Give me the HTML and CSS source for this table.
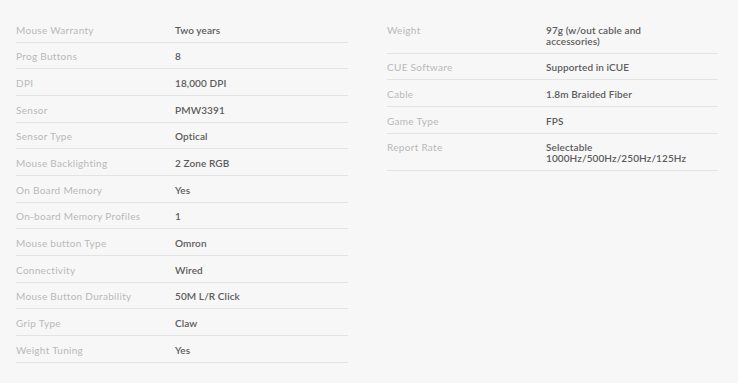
FILE: index.html
```html
<!DOCTYPE html>
<html>
<head>
<meta charset="utf-8">
<link rel="stylesheet" href="styles.css">
</head>
<body>
<div class="specs">
  <dl class="col">
    <div class="row"><dt>Mouse Warranty</dt><dd>Two years</dd></div>
    <div class="row"><dt>Prog Buttons</dt><dd>8</dd></div>
    <div class="row"><dt>DPI</dt><dd>18,000 DPI</dd></div>
    <div class="row"><dt>Sensor</dt><dd>PMW3391</dd></div>
    <div class="row"><dt>Sensor Type</dt><dd>Optical</dd></div>
    <div class="row"><dt>Mouse Backlighting</dt><dd>2 Zone RGB</dd></div>
    <div class="row"><dt>On Board Memory</dt><dd>Yes</dd></div>
    <div class="row"><dt>On-board Memory Profiles</dt><dd>1</dd></div>
    <div class="row"><dt>Mouse button Type</dt><dd>Omron</dd></div>
    <div class="row"><dt>Connectivity</dt><dd>Wired</dd></div>
    <div class="row"><dt>Mouse Button Durability</dt><dd>50M L/R Click</dd></div>
    <div class="row"><dt>Grip Type</dt><dd>Claw</dd></div>
    <div class="row"><dt>Weight Tuning</dt><dd>Yes</dd></div>
  </dl>
  <dl class="col">
    <div class="row"><dt>Weight</dt><dd>97g (w/out cable and accessories)</dd></div>
    <div class="row"><dt>CUE Software</dt><dd>Supported in iCUE</dd></div>
    <div class="row"><dt>Cable</dt><dd>1.8m Braided Fiber</dd></div>
    <div class="row"><dt>Game Type</dt><dd>FPS</dd></div>
    <div class="row"><dt>Report Rate</dt><dd>Selectable 1000Hz/500Hz/250Hz/125Hz</dd></div>
  </dl>
</div>
</body>
</html>
```
FILE: styles.css
```css
html, body {
  margin: 0;
  padding: 0;
  background: #f7f7f7;
}
body {
  font-family: Lato, "Open Sans", sans-serif;
  font-size: 10px;
}
.specs {
  display: grid;
  grid-template-columns: 332px 331px;
  column-gap: 39px;
  align-items: start;
  padding: 16px 0 0 16px;
}
.col {
  margin: 0;
}
.row {
  display: grid;
  grid-template-columns: 159px 1fr;
  padding: 8.8px 0 5.87px;
  border-bottom: 1px solid #e3e3e3;
  line-height: 11px;
}
dt {
  color: #b9b9b9;
  letter-spacing: 0.3px;
}
dd {
  margin: 0;
  color: #5c5c5c;
  font-weight: 600;
  letter-spacing: 0.1px;
  max-width: 145px;
}
```
